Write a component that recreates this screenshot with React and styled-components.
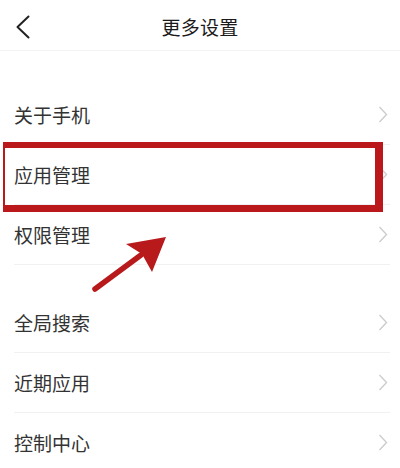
import React from 'react';
import styled, { createGlobalStyle } from 'styled-components';

const GlobalStyle = createGlobalStyle`
    html, body {
        margin: 0;
        padding: 0;
        background: #ffffff;
    }
    body {
        font-family: "Noto Sans CJK SC", "Noto Sans", sans-serif;
    }
`;

// Settings groups
const groups = [
    [
        { label: "关于手机" },
        { label: "应用管理", highlight: true },
        { label: "权限管理" },
    ],
    [
        { label: "全局搜索" },
        { label: "近期应用" },
        { label: "控制中心" },
    ],
];

const BackIcon = () => (
    <svg width="14" height="24" viewBox="0 0 14 24">
        <polyline points="12.5,1.5 1.5,12 12.5,22.5" fill="none" stroke="#222" strokeWidth="2" strokeLinecap="round" strokeLinejoin="round" />
    </svg>
);

const Chevron = () => (
    <svg width="10" height="17" viewBox="0 0 10 17">
        <polyline points="1.5,1 8.5,8.5 1.5,16" fill="none" stroke="#cdcdcd" strokeWidth="1.4" />
    </svg>
);

const Arrow = () => (
    <ArrowWrap width="90" height="68" viewBox="0 0 90 68">
        <line x1="10" y1="59" x2="56" y2="25" stroke="#b81a1c" strokeWidth="5.5" strokeLinecap="round" />
        <polygon points="81,7 41,14 57,24 67,42" fill="#b81a1c" />
    </ArrowWrap>
);

const App = () => {
    return (
        <Page>
            <GlobalStyle />
            <Header>
                <BackButton><BackIcon /></BackButton>
                <Title>更多设置</Title>
            </Header>
            {groups.map((group, gi) => (
                <Group key={gi}>
                    {group.map((item) => (
                        <Row key={item.label}>
                            <Label>{item.label}</Label>
                            <Chevron />
                            {item.highlight && <Highlight />}
                        </Row>
                    ))}
                </Group>
            ))}
            <Arrow />
        </Page>
    );
};

const Page = styled.div`
    position: relative;
    width: 400px;
    height: 468px;
    overflow: hidden;
    background: #fff;
`;

const Header = styled.div`
    position: relative;
    height: 51px;
    display: flex;
    align-items: center;
    justify-content: center;
    padding-top: 3px;
    border-bottom: 1px solid #f3f3f3;
    box-sizing: border-box;
`;

const BackButton = styled.div`
    position: absolute;
    left: 16px;
    top: 15px;
    display: flex;
`;

const Title = styled.div`
    font-size: 19px;
    font-weight: 400;
    color: #1a1a1a;
    letter-spacing: 0.3px;
`;

const Group = styled.div`
    margin-top: 34px;

    & + & {
        margin-top: 28px;
    }
`;

const Row = styled.div`
    position: relative;
    height: 60px;
    margin: 0 10px 0 14px;
    display: flex;
    align-items: center;
    justify-content: space-between;
    border-bottom: 1px solid #f1f1f1;
    box-sizing: border-box;
    padding-right: 2px;
`;

const Label = styled.div`
    font-size: 19px;
    color: #333;
`;

const Highlight = styled.div`
    position: absolute;
    left: -11px;
    right: 7px;
    top: -3px;
    bottom: -8px;
    border-style: solid;
    border-color: #ba181b;
    border-width: 6px 8px 7px 2px;
`;

const ArrowWrap = styled.svg`
    position: absolute;
    left: 85px;
    top: 230px;
`;

export default App;
